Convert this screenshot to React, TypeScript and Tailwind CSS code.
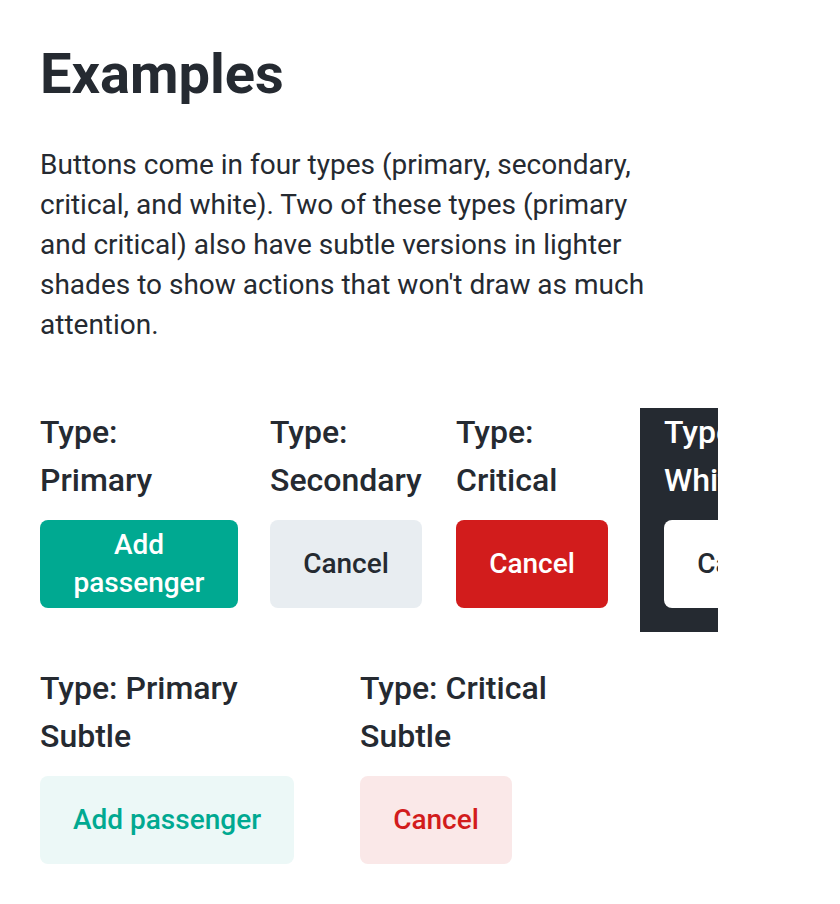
import React from "react";

type Variant = "primary" | "secondary" | "critical" | "white" | "primarySubtle" | "criticalSubtle";

const variantClass: Record<Variant, string> = {
  primary: "bg-[#00a991] text-white",
  secondary: "bg-[#e8edf1] text-[#252a31]",
  critical: "bg-[#d21c1c] text-white",
  white: "bg-white text-[#252a31]",
  primarySubtle: "bg-[#ecf8f7] text-[#00a991]",
  criticalSubtle: "bg-[#fae8e8] text-[#d21c1c]",
};

function Button({ variant, children, width }: { variant: Variant; children: React.ReactNode; width: string }) {
  return (
    <button
      className={`flex h-[88px] items-center justify-center rounded-lg px-8 text-center text-[28px] font-medium leading-[38px] ${width} ${variantClass[variant]}`}
    >
      {children}
    </button>
  );
}

function Label({ children, dark }: { children: React.ReactNode; dark?: boolean }) {
  return (
    <div className={`mb-4 text-[32px] font-medium leading-[48px] ${dark ? "text-white" : "text-[#252a31]"}`}>
      {children}
    </div>
  );
}

export default function App() {
  return (
    <div className="min-h-screen bg-white px-10 pt-[38px] text-[#252a31]" style={{ fontFamily: "Roboto, 'Noto Sans', sans-serif" }}>
      <h1 className="text-[56px] font-bold leading-[72px]">Examples</h1>
      <p className="mt-[35px] w-[640px] text-[28px] leading-10">
        Buttons come in four types (primary, secondary, critical, and white). Two of these types (primary and critical)
        also have subtle versions in lighter shades to show actions that won't draw as much attention.
      </p>

      <div className="mt-[63px] w-[678px] overflow-hidden">
        <div className="flex items-start gap-8">
          <div className="w-[198px] shrink-0">
            <Label>
              Type:
              <br />
              Primary
            </Label>
            <Button variant="primary" width="w-[198px]">
              Add passenger
            </Button>
          </div>
          <div className="w-[154px] shrink-0">
            <Label>
              Type:
              <br />
              Secondary
            </Label>
            <Button variant="secondary" width="w-[152px]">
              Cancel
            </Button>
          </div>
          <div className="w-[152px] shrink-0">
            <Label>
              Type:
              <br />
              Critical
            </Label>
            <Button variant="critical" width="w-[152px]">
              Cancel
            </Button>
          </div>
          <div className="w-[200px] shrink-0 bg-[#252a31] px-6 pb-6">
            <Label dark>
              Type:
              <br />
              White
            </Label>
            <Button variant="white" width="w-[152px]">
              Cancel
            </Button>
          </div>
        </div>
      </div>

      <div className="mt-[32px] flex items-start gap-[66px]">
        <div className="w-[254px]">
          <Label>
            Type: Primary
            <br />
            Subtle
          </Label>
          <Button variant="primarySubtle" width="w-[254px]">
            Add passenger
          </Button>
        </div>
        <div className="w-[200px]">
          <Label>
            Type: Critical
            <br />
            Subtle
          </Label>
          <Button variant="criticalSubtle" width="w-[152px]">
            Cancel
          </Button>
        </div>
      </div>
    </div>
  );
}
